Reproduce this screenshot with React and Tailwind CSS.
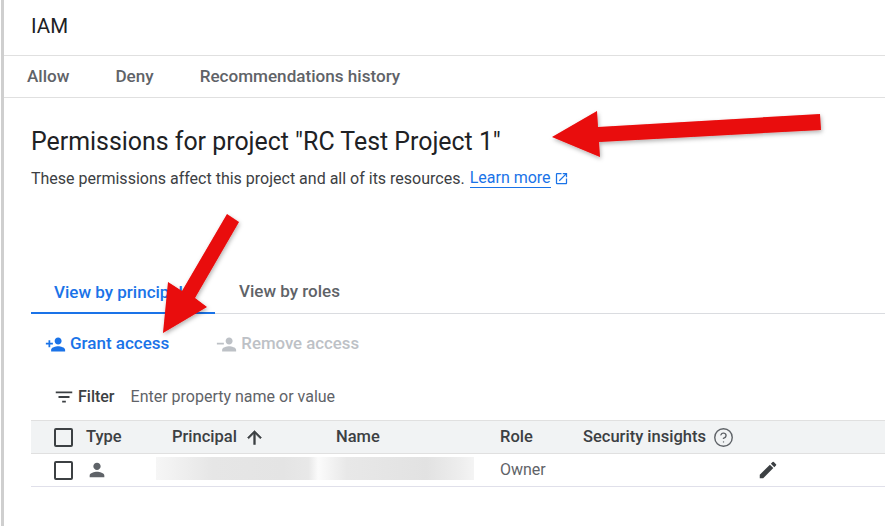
import { CircleHelp } from 'lucide-react';

function PersonAdd({ className }) {
  return (
    <svg viewBox="0 0 24 24" className={className} fill="currentColor">
      <path d="M15 12c2.21 0 4-1.79 4-4s-1.79-4-4-4-4 1.79-4 4 1.79 4 4 4zm-9-2V7H4v3H1v2h3v3h2v-3h3v-2H6zm9 4c-2.67 0-8 1.34-8 4v2h16v-2c0-2.66-5.33-4-8-4z" />
    </svg>
  );
}

function PersonRemove({ className }) {
  return (
    <svg viewBox="0 0 24 24" className={className} fill="currentColor">
      <path d="M15 12c2.21 0 4-1.79 4-4s-1.79-4-4-4-4 1.79-4 4 1.79 4 4 4zM1 10v2h8v-2H1zm14 4c-2.67 0-8 1.34-8 4v2h16v-2c0-2.66-5.33-4-8-4z" />
    </svg>
  );
}

function Person({ className }) {
  return (
    <svg viewBox="0 0 24 24" className={className} fill="currentColor">
      <path d="M12 12c2.21 0 4-1.79 4-4s-1.79-4-4-4-4 1.79-4 4 1.79 4 4 4zm0 2c-2.67 0-8 1.34-8 4v2h16v-2c0-2.66-5.33-4-8-4z" />
    </svg>
  );
}

function Pencil({ className }) {
  return (
    <svg viewBox="0 0 24 24" className={className} fill="currentColor">
      <path d="M3 17.25V21h3.75L17.81 9.94l-3.75-3.75L3 17.25zM20.71 7.04a1 1 0 0 0 0-1.41l-2.34-2.34a1 1 0 0 0-1.41 0l-1.83 1.83 3.75 3.75 1.83-1.83z" />
    </svg>
  );
}

function FilterLines({ className }) {
  return (
    <svg viewBox="0 0 24 24" className={className} fill="currentColor">
      <path d="M10 18h4v-2h-4v2zM3 6v2h18V6H3zm3 7h12v-2H6v2z" />
    </svg>
  );
}

function OpenInNew({ className }) {
  return (
    <svg viewBox="0 0 24 24" className={className} fill="currentColor">
      <path d="M19 19H5V5h7V3H5a2 2 0 0 0-2 2v14a2 2 0 0 0 2 2h14c1.1 0 2-.9 2-2v-7h-2v7zM14 3v2h3.59l-9.83 9.83 1.41 1.41L19 6.41V10h2V3h-7z" />
    </svg>
  );
}

function ArrowUpward({ className }) {
  return (
    <svg viewBox="0 0 24 24" className={className} fill="currentColor" stroke="currentColor" strokeWidth="0.6">
      <path d="M4 12l1.41 1.41L11 7.83V20h2V7.83l5.58 5.59L20 12l-8-8-8 8z" />
    </svg>
  );
}

function Checkbox() {
  return <span className="block w-[19px] h-[19px] rounded-[2px] border-2 border-[#3c4043] bg-transparent" />;
}

// the two red callouts pasted on top of the screenshot
function Arrows() {
  return (
    <svg className="absolute left-0 top-0 pointer-events-none" width="885" height="526">
      <defs>
        <filter id="arrowShadow" x="-10%" y="-10%" width="120%" height="130%">
          <feDropShadow dx="1" dy="2" stdDeviation="2" floodColor="#000" floodOpacity="0.3" />
        </filter>
      </defs>
      <g fill="#e90808" filter="url(#arrowShadow)">
        <polygon points="552,137 597,111 598,127 820,114 821,130 599,142 600,157" />
        <polygon points="227,214 239,222 195,298 207,307 163,333 168,282 182,291" />
      </g>
    </svg>
  );
}

export default function App() {
  return (
    <div className="relative flex w-[885px] h-[526px] overflow-hidden bg-white font-['Roboto',sans-serif]">
      <div className="w-[3px] ml-px bg-[#cfcfcf] shrink-0" />
      <div className="flex-1 min-w-0">
        <header className="h-[56px] flex items-center pl-[27px] pb-[2px] border-b border-[#e0e0e0]">
          <h1 className="text-[20.5px] text-[#202124]">IAM</h1>
        </header>

        <nav className="h-[42px] flex items-center gap-[46px] pl-[23px] border-b border-[#e0e0e0] text-[17.1px] font-medium text-[#5f6368]">
          <span>Allow</span>
          <span>Deny</span>
          <span>Recommendations history</span>
        </nav>

        <section className="pl-[27px] pt-[26px]">
          <h2 className="text-[24.9px] leading-[36px] text-[#202124]">Permissions for project "RC Test Project 1"</h2>
          <p className="mt-[6px] h-[24px] flex items-center text-[16px] leading-[19px] text-[#3c4043]">
            These permissions affect this project and all of its resources.
            <span className="ml-[5px] text-[#1a73e8] border-b border-[#1a73e8]">Learn more</span>
            <OpenInNew className="ml-[3px] w-[15px] h-[15px] text-[#1a73e8]" />
          </p>
        </section>

        <div className="mt-[80px] ml-[27px] flex h-[44px] border-b border-[#dadce0] text-[17px] font-medium">
          <div className="w-[184px] pl-[23px] pt-[3px] flex items-center text-[#1a73e8] border-b-2 border-[#1a73e8] h-[44px]">View by principals</div>
          <div className="pl-[24px] pt-[1px] flex items-center text-[#5f6368]">View by roles</div>
        </div>

        <div className="ml-[41px] h-[60px] flex items-center text-[17px] font-medium">
          <PersonAdd className="w-[21px] h-[21px] text-[#1a73e8]" />
          <span className="ml-[4px] text-[#1a73e8]">Grant access</span>
          <PersonRemove className="ml-[47px] w-[21px] h-[21px] text-[#bdc1c6]" />
          <span className="ml-[4px] text-[16.8px] text-[#bdc1c6]">Remove access</span>
        </div>

        <div className="mt-[12px] ml-[49px] h-[22px] flex items-center text-[16px]">
          <FilterLines className="w-[22px] h-[22px] text-[#3c4043]" />
          <span className="ml-[3px] font-medium text-[#3c4043]">Filter</span>
          <span className="ml-[16px] text-[#5f6368]">Enter property name or value</span>
        </div>

        <div className="mt-[12px] ml-[27px] text-[16px]">
          <div className="h-[34px] grid grid-cols-[23px_32px_86px_164px_164px_83px_1fr] items-center bg-[#f1f3f4] border-y border-[#e0e0e0] text-[16.5px] font-medium text-[#3c4043]">
            <span />
            <Checkbox />
            <span>Type</span>
            <span className="flex items-center gap-[7px]">
              Principal
              <ArrowUpward className="w-[21px] h-[21px]" />
            </span>
            <span>Name</span>
            <span>Role</span>
            <span className="flex items-center gap-[7px]">
              Security insights
              <CircleHelp className="w-[21px] h-[21px] text-[#5f6368]" strokeWidth={1.6} />
            </span>
          </div>
          <div className="h-[33px] grid grid-cols-[23px_32px_70px_318px_26px_257px_1fr] items-center border-b border-[#e0e0ea] text-[#5f6368]">
            <span />
            <Checkbox />
            <Person className="w-[22px] h-[22px] text-[#5f6368]" />
            <span className="h-[23px] mb-[3px] bg-[linear-gradient(90deg,#f6f6f6_0%,#e6e6e6_18%,#e4e4e4_40%,#e8e8e8_48%,#fbfbfb_51%,#e8e8e8_60%,#e2e2e2_85%,#eeeeee_96%,#f4f4f4_100%)]" />
            <span />
            <span>Owner</span>
            <Pencil className="w-[22px] h-[22px] text-[#3c4043]" />
          </div>
        </div>
      </div>
      <Arrows />
    </div>
  );
}
